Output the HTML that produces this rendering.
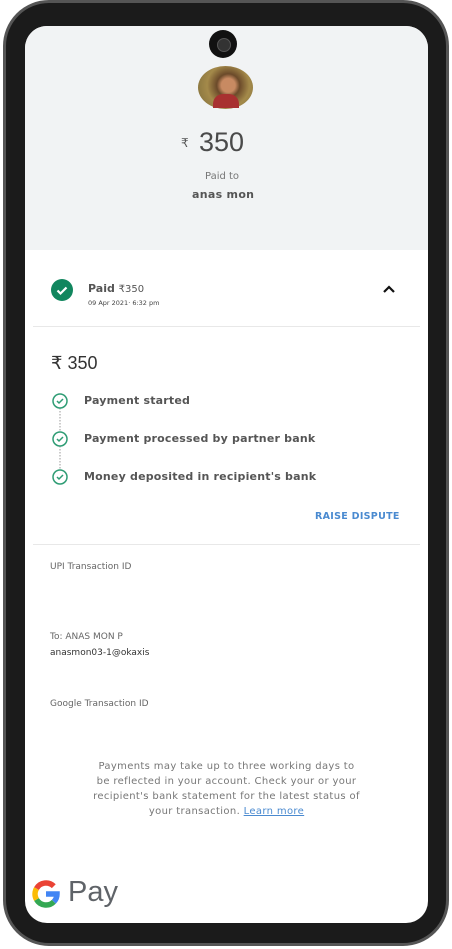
<!DOCTYPE html>
<html><head><meta charset="utf-8"><style>
*{margin:0;padding:0;box-sizing:border-box}
body{width:452px;height:949px;background:#fff;position:relative;overflow:hidden;font-family:"DejaVu Sans","Liberation Sans",sans-serif}
.phone{position:absolute;left:3px;top:0;width:446px;height:946px;background:#1b1b1b;border-radius:46px;border:3px solid #555}
.screen{position:absolute;left:25px;top:26px;width:403px;height:897px;background:#fff;border-radius:22px;overflow:hidden}
.top{position:absolute;left:0;top:0;width:403px;height:224px;background:#f1f3f4}
.cam{position:absolute;left:184px;top:4px;width:28px;height:28px;border-radius:50%;background:#111}
.cam:after{content:"";position:absolute;left:8px;top:8px;width:12px;height:12px;border-radius:50%;background:#333;border:1px solid #555}
.av{position:absolute;left:173px;top:40px;width:55px;height:43px;border-radius:50%;background:radial-gradient(circle at 55% 45%,#c88a62 0 18%,#6b4a2a 30%,#a48a4a 55%,#7a6a3a 100%)}
.av:after{content:"";position:absolute;left:15px;top:28px;width:26px;height:14px;background:#a83030;border-radius:10px 10px 0 0}
.t{position:absolute;white-space:nowrap;color:#555}
.sep{position:absolute;left:8px;width:387px;height:1px;background:#e8e8e8}
</style></head><body>
<div class="phone"></div>
<div class="screen">
<div class="top"></div>
<div class="cam"></div>
<div class="av"></div>
<div class="t" style="left:156px;top:110px;font-size:12px;color:#555">₹</div>
<div class="t" style="left:174px;top:101px;font-size:27px;color:#4a4a4a;font-family:'Liberation Sans',sans-serif">350</div>
<div class="t" style="left:180px;top:145px;font-size:10px;color:#777">Paid to</div>
<div class="t" style="left:167px;top:162px;font-size:11px;color:#555;font-weight:bold;letter-spacing:.3px">anas mon</div>

<svg style="position:absolute;left:26px;top:253px" width="22" height="22"><circle cx="11" cy="11" r="11" fill="#11865e"/><path d="M6.5 11.5l3 3 6-6" stroke="#fff" stroke-width="2.2" fill="none"/></svg>
<div class="t" style="left:63px;top:256px;font-size:11px;color:#555;font-weight:bold">Paid <span style="font-weight:normal;font-size:10px">₹350</span></div>
<div class="t" style="left:63px;top:273px;font-size:6.5px;color:#444">09 Apr 2021· 6:32 pm</div>
<svg style="position:absolute;left:357px;top:258px" width="14" height="10"><path d="M2 8l5-5 5 5" stroke="#111" stroke-width="2.2" fill="none"/></svg>
<div class="sep" style="top:300px"></div>

<div class="t" style="left:26px;top:327px;font-size:18px;color:#333;font-family:'Liberation Sans',sans-serif">₹ 350</div>
<svg style="position:absolute;left:26px;top:365px" width="20" height="100">
<path d="M9 17V41M9 55V79" stroke="#999" stroke-width="1" stroke-dasharray="1.5 1.5"/>
<g fill="none" stroke="#2e9c74" stroke-width="1.5"><circle cx="9" cy="10" r="7"/><circle cx="9" cy="48" r="7"/><circle cx="9" cy="86" r="7"/>
<path d="M6 10l2 2 4-4M6 48l2 2 4-4M6 86l2 2 4-4"/></g></svg>
<div class="t" style="left:59px;top:368px;font-size:11px;color:#555;font-weight:bold;letter-spacing:.2px">Payment started</div>
<div class="t" style="left:59px;top:406px;font-size:11px;color:#555;font-weight:bold;letter-spacing:.2px">Payment processed by partner bank</div>
<div class="t" style="left:59px;top:444px;font-size:11px;color:#555;font-weight:bold;letter-spacing:.2px">Money deposited in recipient's bank</div>
<div class="t" style="left:290px;top:485px;font-size:9.5px;color:#4a8ad0;font-weight:bold;letter-spacing:.3px">RAISE DISPUTE</div>
<div class="sep" style="top:518px"></div>

<div class="t" style="left:25px;top:536px;font-size:9px;color:#666">UPI Transaction ID</div>
<div class="t" style="left:25px;top:606px;font-size:9px;color:#666">To: ANAS MON P</div>
<div class="t" style="left:25px;top:622px;font-size:9px;color:#333">anasmon03-1@okaxis</div>
<div class="t" style="left:25px;top:673px;font-size:9px;color:#666">Google Transaction ID</div>

<div style="position:absolute;left:0px;top:733px;width:403px;text-align:center;font-size:10px;letter-spacing:.35px;line-height:15px;color:#777;white-space:nowrap">Payments may take up to three working days to<br>be reflected in your account. Check your or your<br>recipient's bank statement for the latest status of<br>your transaction. <span style="color:#4a8ad0;text-decoration:underline">Learn more</span></div>

<svg style="position:absolute;left:7px;top:854px" width="29" height="29" viewBox="0 0 29 29" fill="none" stroke-width="5.5">
<path d="M14 14H25A11 11 0 0 1 21.8 21.8" stroke="#4285f4"/>
<path d="M21.8 21.8A11 11 0 0 1 4.5 19.5" stroke="#34a853"/>
<path d="M4.5 19.5A11 11 0 0 1 4.5 8.5" stroke="#fbbc05"/>
<path d="M4.5 8.5A11 11 0 0 1 21.8 6.2" stroke="#ea4335"/>
</svg>
<div class="t" style="left:43px;top:850px;font-size:29px;color:#5f6368;font-family:'Liberation Sans',sans-serif">Pay</div>
</div>
</body></html>
